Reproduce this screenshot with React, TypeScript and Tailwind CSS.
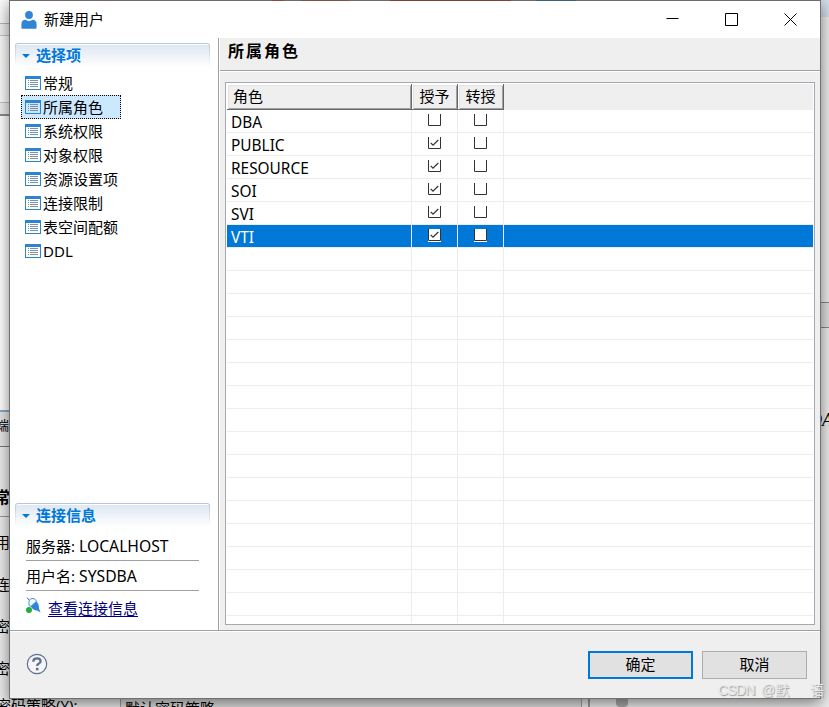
import { useState } from "react";

const SECTIONS = [
  "常规",
  "所属角色",
  "系统权限",
  "对象权限",
  "资源设置项",
  "连接限制",
  "表空间配额",
  "DDL",
];

const ROLES = [
  { name: "DBA", granted: false, admin: false },
  { name: "PUBLIC", granted: true, admin: false },
  { name: "RESOURCE", granted: true, admin: false },
  { name: "SOI", granted: true, admin: false },
  { name: "SVI", granted: true, admin: false },
  { name: "VTI", granted: true, admin: false },
];

const EMPTY_ROWS = 16;

function UserIcon() {
  return (
    <svg className="h-[18px] w-4" viewBox="0 0 16 18" fill="#2f86d8">
      <ellipse cx="8" cy="4" rx="3.9" ry="4" />
      <path d="M.4 17V13.2Q.4 9 4.6 8.8Q8 11.4 11.4 8.8Q15.6 9 15.6 13.2V17Q15.6 17.8 14.8 17.8H1.2Q.4 17.8 .4 17Z" />
    </svg>
  );
}

function FormIcon() {
  return (
    <svg
      className="h-3.5 w-4 shrink-0"
      viewBox="0 0 16 14"
      fill="none"
      shapeRendering="crispEdges"
    >
      <path d="M.5 .5H15.5V13.5H.5Z" stroke="#2b84d6" />
      <path d="M0 0H16V3H0Z" fill="#2b84d6" />
      <path
        d="M3 4.5h1M3 6.5h1M3 8.5h1M3 10.5h1M5 4.5h8M5 6.5h8M5 8.5h8M5 10.5h8"
        stroke="#7c8fa9"
      />
    </svg>
  );
}

function PlugIcon() {
  return (
    <svg className="h-[17px] w-[15px]" viewBox="0 0 15 17" fill="none">
      <path d="M1 .5L3.2 3.4" stroke="#2f86d8" />
      <path d="M3 8.6V4.2Q3.6 1.2 7 1.4Q9.8 2 10.6 4.4L4.8 9.4Z" fill="#f4faff" stroke="#4a98de" />
      <path d="M4.8 9.4L10.4 4.4Q13.2 7 13 11.4L14.6 15.6L11 13.4Q7.2 13.4 4.8 9.4Z" fill="#2f86d8" />
      <circle cx="3" cy="13" r="3" fill="#22b03c" />
    </svg>
  );
}

function HelpIcon() {
  return (
    <svg className="h-[22px] w-[22px]" viewBox="0 0 22 22" fill="none">
      <circle cx="11" cy="11" r="9.7" fill="#f4f5f7" stroke="#5f7191" strokeWidth="1.2" />
      <path
        d="M7.3 8.7Q7.3 5.4 11 5.4Q14.6 5.4 14.6 8.2Q14.6 9.8 12.6 10.8Q11.2 11.5 11.2 13"
        stroke="#5f7191"
        strokeWidth="2.3"
      />
      <rect x="9.9" y="14.8" width="2.6" height="2.5" fill="#5f7191" />
    </svg>
  );
}

function GroupHeader({ title }: { title: string }) {
  return (
    <div className="h-6 rounded-t-[3px] bg-gradient-to-b from-[#b3c6da] to-white px-px pt-px">
      <div className="flex h-full items-center rounded-t-[2px] border-t border-white bg-gradient-to-b from-[#dfe7f3] to-white pl-1.5">
        <svg className="h-1 w-2" viewBox="0 0 8 4" fill="#0078d7">
          <path d="M0 0H8L4 4Z" />
        </svg>
        <span className="ml-1.5 pb-0.5 text-[15px] leading-none font-bold text-[#0078d7]">
          {title}
        </span>
      </div>
    </div>
  );
}

function CheckCell({
  checked,
  selected,
  onToggle,
}: {
  checked: boolean;
  selected: boolean;
  onToggle: () => void;
}) {
  return (
    <div className="flex w-[46px] shrink-0 justify-center border-r border-[#ececec] pt-1">
      <button
        type="button"
        role="checkbox"
        aria-checked={checked}
        onClick={onToggle}
        className={selected ? "h-[13px] w-[13px] bg-white" : "h-[13px] w-[13px]"}
      >
        <svg className="block h-[13px] w-[13px]" viewBox="0 0 13 13" fill="none">
          <path d="M.5 0V11.5H12.5V0" stroke="#333" />
          {checked ? <path d="M2.7 5.8L5 8.2L10.3 3" stroke="#333" strokeWidth="1.2" /> : null}
        </svg>
      </button>
    </div>
  );
}

function RoleTable() {
  const [roles, setRoles] = useState(ROLES);
  const [selected, setSelected] = useState("VTI");

  const toggle = (name: string, key: "granted" | "admin") =>
    setRoles((prev) =>
      prev.map((r) => (r.name === name ? { ...r, [key]: !r[key] } : r)),
    );

  const headClass =
    "flex h-[26px] shrink-0 items-center border-r border-b border-[#696969] bg-[#efefef] shadow-[inset_1px_1px_0_#fff,inset_2px_2px_0_#e3e3e3,inset_-1px_-1px_0_#a0a0a0]";

  return (
    <div className="flex min-h-0 flex-1 flex-col overflow-hidden border border-[#a5a8b0] bg-white p-px">
      <div className="flex shrink-0 bg-[#efefef] text-[15px]">
        <div className={`${headClass} w-[185px] pl-1.5`}>角色</div>
        <div className={`${headClass} w-[46px] justify-center`}>授予</div>
        <div className={`${headClass} w-[46px] justify-center`}>转授</div>
      </div>
      {roles.map((role) => {
        const active = role.name === selected;
        return (
          <div
            key={role.name}
            onClick={() => setSelected(role.name)}
            className={[
              "flex h-[23px] shrink-0 border-b border-[#ececec] bg-clip-padding",
              active ? "bg-[#0078d7] text-white" : "text-black",
            ].join(" ")}
          >
            <div className="w-[185px] shrink-0 border-r border-[#ececec] pt-px pl-1 text-[15.4px] leading-6">
              {role.name}
            </div>
            <CheckCell
              checked={role.granted}
              selected={active}
              onToggle={() => toggle(role.name, "granted")}
            />
            <CheckCell
              checked={role.admin}
              selected={active}
              onToggle={() => toggle(role.name, "admin")}
            />
          </div>
        );
      })}
      {Array.from({ length: EMPTY_ROWS }, (_, i) => (
        <div key={i} className="flex h-[23px] shrink-0 border-b border-[#ececec]">
          <div className="w-[185px] border-r border-[#ececec]" />
          <div className="w-[46px] border-r border-[#ececec]" />
          <div className="w-[46px] border-r border-[#ececec]" />
        </div>
      ))}
      <div className="flex flex-1">
        <div className="w-[185px] border-r border-[#ececec]" />
        <div className="w-[46px] border-r border-[#ececec]" />
        <div className="w-[46px] border-r border-[#ececec]" />
      </div>
    </div>
  );
}

function Sidebar() {
  const [current, setCurrent] = useState("所属角色");

  return (
    <aside className="flex w-[209px] shrink-0 flex-col border-r border-[#a0a0a0] bg-white pt-[5px] pr-2 pl-[5px]">
      <GroupHeader title="选择项" />
      <nav className="mt-1 flex flex-col items-start pl-1.5">
        {SECTIONS.map((label) => (
          <button
            key={label}
            type="button"
            onClick={() => setCurrent(label)}
            className={[
              "flex h-6 items-center gap-0.5 border pr-[17px] pl-[3px] text-[15px] leading-none",
              label === current
                ? "border-dotted border-black bg-[#cce8ff]"
                : "border-transparent",
            ].join(" ")}
          >
            <FormIcon />
            {label}
          </button>
        ))}
      </nav>
      <div className="mt-auto h-[127px]">
        <GroupHeader title="连接信息" />
        <div className="ml-[11px] w-[173px] pt-1 text-[15px]">
          <div className="flex h-[30px] items-center gap-1 border-b border-[#a0a0a0] pt-px">
            <span>服务器:</span>
            <span className="pt-0.5 text-[15.7px]">LOCALHOST</span>
          </div>
          <div className="flex h-[30px] items-center gap-1 border-b border-[#a0a0a0] pt-px">
            <span>用户名:</span>
            <span className="pt-0.5 text-[15.7px]">SYSDBA</span>
          </div>
          <div className="flex pt-1.5">
            <PlugIcon />
            <a href="#" className="ml-[7px] leading-[22px] text-[#00007f] underline underline-offset-2">
              查看连接信息
            </a>
          </div>
        </div>
      </div>
    </aside>
  );
}

function Dialog() {
  return (
    <div
      role="dialog"
      aria-label="新建用户"
      className="absolute top-0 left-[9px] flex h-[699px] w-[812px] flex-col border border-t-0 border-[#707070] bg-[#efefef] shadow-[0_4px_14px_rgba(0,0,0,0.5)]"
    >
      <div className="flex h-px shrink-0 bg-[#6e6b6e]">
        <div className="mr-[17px] ml-[262px] w-3 bg-[#8a4a3c]" />
        <div className="mr-[41px] w-12 bg-[#7d5249]" />
        <div className="mr-[25px] w-[121px] bg-[#7f3f31]" />
        <div className="w-10 bg-[#3f5f7c]" />
      </div>
      <header className="flex h-[37px] shrink-0 items-center bg-white pl-[11px]">
        <UserIcon />
        <h1 className="ml-[7px] pb-px text-[15px]">新建用户</h1>
        <div className="mr-[23px] ml-auto flex gap-[46px]">
          <svg className="h-[13px] w-[13px]" viewBox="0 0 13 13" stroke="#000">
            <path d="M.5 5.5H12.5" />
          </svg>
          <svg className="h-[13px] w-[13px]" viewBox="0 0 13 13" fill="none" stroke="#000">
            <path d="M.5 .5H12.5V12.5H.5Z" />
          </svg>
          <svg className="h-[13px] w-[13px]" viewBox="0 0 13 13" stroke="#000">
            <path d="M.5 .5L12.5 12.5M12.5 .5L.5 12.5" />
          </svg>
        </div>
      </header>

      <div className="flex h-[593px] shrink-0 border-b border-[#a0a0a0]">
        <Sidebar />
        <main className="flex min-w-0 flex-1 flex-col border-l border-white">
          <h2 className="h-[33px] shrink-0 border-b border-[#a0a0a0] pl-2 text-base leading-[26px] font-bold tracking-[2px]">
            所属角色
          </h2>
          <div className="flex min-h-0 flex-1 flex-col border-t border-white pt-[10px] pr-[5px] pb-[5px] pl-[5px]">
            <RoleTable />
          </div>
        </main>
      </div>

      <footer className="flex flex-1 items-center border-t border-white pr-[13px] pl-4">
        <div className="pb-0.5">
          <HelpIcon />
        </div>
        <div className="ml-auto flex gap-[9px] text-[15px]">
          <button type="button" className="h-7 w-[105px] border-2 border-[#0078d7] bg-[#e1e1e1] pb-0.5">
            确定
          </button>
          <button type="button" className="h-7 w-[105px] border border-[#adadad] bg-[#e1e1e1] pb-0.5">
            取消
          </button>
        </div>
      </footer>
    </div>
  );
}

// Parts of the parent window that stick out around the dialog.
function Backdrop() {
  return (
    <div className="flex h-full flex-col text-[15px] leading-none whitespace-nowrap">
      <div className="flex h-[698px] justify-between">
        <div className="flex w-4 flex-col">
          <div className="h-6 shrink-0 border-b border-[#b5b5b5] bg-[#fafafa]" />
          <div className="h-3 shrink-0 border-b border-[#c4c4c4] bg-[#f0f0f0]" />
          <div className="h-[67px] shrink-0 border-b border-[#c4c4c4] bg-[#fafafa]" />
          <div className="h-[13px] shrink-0 border-b-2 border-[#8c8c8c] bg-[#eee]" />
          <div className="h-[296px] shrink-0 border-b-2 border-[#8aa6c6] bg-white" />
          <div className="h-[35px] shrink-0 border-b border-[#777] bg-[#e6e6e6] pt-[7px] text-[13px]">
            <span className="-ml-1">端</span>
          </div>
          <div className="h-[70px] shrink-0 border-b border-[#999] pt-[38px] text-base font-bold">
            <span className="-ml-1.5">常</span>
          </div>
          <div className="flex flex-1 flex-col pt-[18px]">
            <span className="-ml-[5px] h-[42px]">用</span>
            <span className="-ml-[5px] h-[42px]">连</span>
            <span className="-ml-[5px] h-[42px]">密</span>
            <span className="-ml-[5px] h-[42px]">密</span>
          </div>
        </div>
        <div className="flex w-[9px] flex-col">
          <div className="h-[17px] shrink-0 bg-[#d3dfec]" />
          <div className="h-[286px] shrink-0 border-b border-[#888]" />
          <div className="h-[25px] shrink-0 border-b border-[#888] bg-[#dedede]" />
          <div className="pt-[83px] font-['Liberation_Serif'] text-lg leading-none italic">
            <span className="-ml-[11px]">DA</span>
          </div>
        </div>
      </div>
      <div className="flex h-[9px]">
        <div className="w-[120px] shrink-0">
          <span className="-ml-1">密码策略(Y):</span>
        </div>
        <div className="w-[462px] border-r border-l border-[#a0a0a0] bg-[#ddd] pt-[3px] pl-1">
          默认密码策略
        </div>
        <div className="mr-[26px] w-2 border-r-2 border-[#999]" />
        <div className="w-3 rounded-b bg-[#aaa]" />
      </div>
    </div>
  );
}

export default function App() {
  return (
    <div className="relative h-[707px] w-[829px] overflow-hidden bg-[#ececec] font-['Noto_Sans','Noto_Sans_CJK_SC',sans-serif] text-black">
      <Backdrop />
      <Dialog />
      {/* Watermark */}
      <div className="absolute top-[681px] left-[718px] flex font-['Liberation_Sans','Noto_Sans_CJK_SC',sans-serif] text-sm leading-[18px] whitespace-nowrap text-[#e9e9e9] [text-shadow:1px_1px_1px_#999]">
        <span className="w-[43px] tracking-[-0.8px]">CSDN</span>
        <span className="w-[49px]">@默</span>
        <span>语</span>
      </div>
    </div>
  );
}
